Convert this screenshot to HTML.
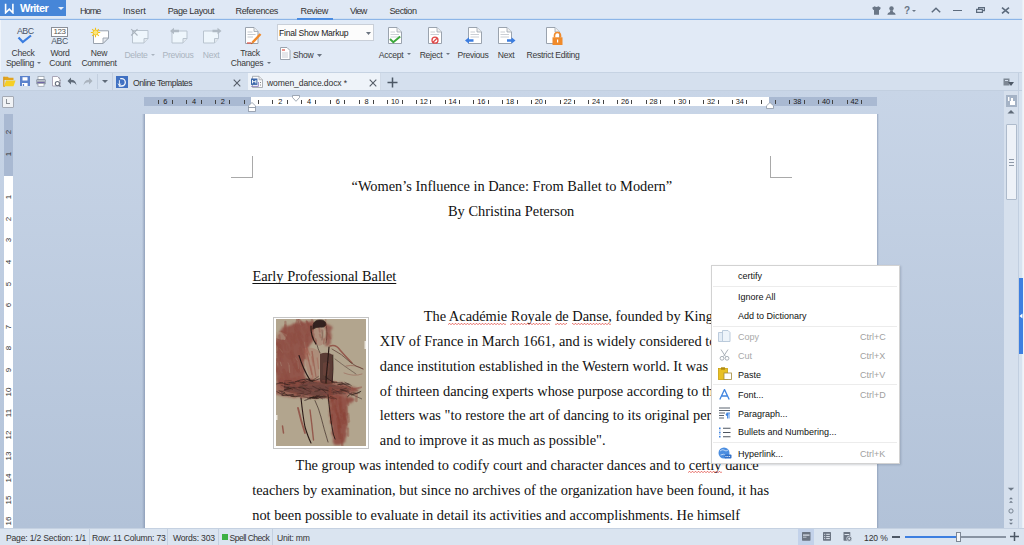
<!DOCTYPE html>
<html><head><meta charset="utf-8"><style>
*{margin:0;padding:0;box-sizing:border-box}
html,body{width:1024px;height:545px;overflow:hidden}
body{position:relative;background:#c3d0e2;font-family:"Liberation Sans",sans-serif;font-size:9px;color:#333}
.a{position:absolute}
svg{display:block}
.ui{font-size:8.6px;letter-spacing:-0.25px;color:#3a3a3a;white-space:nowrap;line-height:10px}
.tab{top:4px;font-size:9.1px;letter-spacing:-0.2px;color:#333;white-space:nowrap;line-height:12px}
.rb{font-size:8.6px;letter-spacing:-0.3px;color:#3a3a3a;white-space:nowrap;line-height:10px;text-align:center}
.dis{color:#aab4c0}
.tk{top:100px;width:1px;height:3.5px;background:#444}
.rn{top:96.5px;width:20px;text-align:center;font-size:7.4px;line-height:10px;color:#1a1a1a;letter-spacing:-0.1px}
.vn{left:4.2px;width:10px;height:10px;font-size:8px;line-height:10px;text-align:center;color:#333;transform:rotate(-90deg)}
.doc{font-family:"Liberation Serif",serif;font-size:14.4px;color:#111;white-space:nowrap;line-height:17px}
.mi{font-size:9px;color:#111;white-space:nowrap;line-height:11px}
.mg{color:#a8a8a8}
.sc{left:860px;font-size:9px;color:#a0a0a0;white-space:nowrap;line-height:11px}
.st{top:533px;font-size:8.6px;letter-spacing:-0.2px;color:#333;white-space:nowrap;line-height:11px}
.ssep{top:529px;width:1px;height:16px;background:#c3cfdf}

</style></head><body>
<!-- title bar -->
<div class="a" style="left:0;top:0;width:1024px;height:20px;background:#dfe8f5"></div>
<div class="a" style="left:0;top:18px;width:1022px;height:1px;background:#d0e0f3"></div><div class="a" style="left:0;top:19px;width:1022px;height:1px;background:#8cb5e8"></div>
<div class="a" style="left:0;top:0;width:66px;height:16px;background:#4686d8"></div>
<svg class="a" style="left:4px;top:3px" width="11" height="11" viewBox="0 0 11 11"><path d="M1.6 0.8 V9.8 L5.3 6.2 L8.9 9.8 V0.8" fill="none" stroke="#fff" stroke-width="1.6" stroke-linejoin="miter"/></svg>
<div class="a" style="left:20px;top:2px;font-size:11px;font-weight:bold;letter-spacing:-0.55px;color:#fff;line-height:13px">Writer</div>
<svg class="a" style="left:58px;top:7px" width="6" height="3" viewBox="0 0 6 3"><path d="M0 0H6L3 3Z" fill="#e6eefa"/></svg>
<div class="a tab" style="left:80px;top:4.5px;letter-spacing:-0.95px">Home</div>
<div class="a tab" style="left:123px;top:4.5px;letter-spacing:0px">Insert</div>
<div class="a tab" style="left:167.7px;top:4.5px;letter-spacing:-0.42px">Page Layout</div>
<div class="a tab" style="left:235.5px;top:4.5px;letter-spacing:-0.4px">References</div>
<div class="a tab" style="left:300.5px;top:4.5px;letter-spacing:-0.4px">Review</div>
<div class="a tab" style="left:350px;top:4.5px;letter-spacing:-0.75px">View</div>
<div class="a tab" style="left:389.5px;top:4.5px;letter-spacing:-0.47px">Section</div>
<div class="a" style="left:297px;top:18px;width:36px;height:2px;background:#4a8ce2"></div>
<!-- title right icons -->
<svg class="a" style="left:872px;top:6px" width="9" height="9" viewBox="0 0 9 9"><path d="M2.6 0.3 L0.2 1.8 L1.2 4 L2 3.7 V8.7 H7 V3.7 L7.8 4 L8.8 1.8 L6.4 0.3 Q4.5 1.8 2.6 0.3Z" fill="#6a7686"/></svg>
<svg class="a" style="left:887px;top:6px" width="9" height="9" viewBox="0 0 9 9"><circle cx="4.5" cy="2.4" r="2.2" fill="#6a7686"/><path d="M3.3 4.2 H5.7 L6 6 Q8.5 6.5 8.7 8.8 H0.3 Q0.5 6.5 3 6Z" fill="#6a7686"/></svg>
<div class="a" style="left:904px;top:5px;font-size:10px;font-weight:bold;color:#6a7686;line-height:11px">?</div>
<svg class="a" style="left:912px;top:10px" width="4" height="2" viewBox="0 0 4 2"><path d="M0 0H4L2 2Z" fill="#6a7686"/></svg>
<svg class="a" style="left:931px;top:7px" width="10" height="6" viewBox="0 0 10 6"><path d="M0.8 5.2 L5 1.2 L9.2 5.2" fill="none" stroke="#5d6b7d" stroke-width="1.5"/></svg>
<div class="a" style="left:953px;top:9.5px;width:9px;height:1.3px;background:#5d6b7d"></div>
<svg class="a" style="left:976px;top:7px" width="9" height="6" viewBox="0 0 9 6"><path d="M0.6 2.4 H6.4 V5.4 H0.6Z M2.6 2.4 V0.6 H8.4 V3.6 H6.4" fill="none" stroke="#5d6b7d" stroke-width="1.2"/></svg>
<svg class="a" style="left:1001px;top:7px" width="9" height="7" viewBox="0 0 9 7"><path d="M1 0.6 L8 6.4 M8 0.6 L1 6.4" stroke="#5d6b7d" stroke-width="1.6"/></svg>

<!-- ribbon -->
<div class="a" style="left:0;top:20px;width:1024px;height:52px;background:#e1eaf6;border-left:1px solid #f0f4fa"></div>
<div class="a" style="left:0;top:72px;width:1024px;height:1px;background:#c6d3e3"></div>
<!-- check spelling -->
<div class="a" style="left:17px;top:26.5px;font-size:8.8px;letter-spacing:-0.5px;color:#4a5566;line-height:9px">ABC</div>
<svg class="a" style="left:17px;top:34px" width="16" height="10" viewBox="0 0 16 10"><path d="M1.5 3.5 L5.8 8 L14 1.5" fill="none" stroke="#3b7de0" stroke-width="2.2"/></svg>
<div class="a rb" style="left:3px;top:48px;width:40px">Check</div>
<div class="a rb" style="left:0px;top:58px;width:40px">Spelling</div>
<svg class="a" style="left:37px;top:62px" width="4" height="2" viewBox="0 0 4 2"><path d="M0 0H4L2 2Z" fill="#6b7480"/></svg>
<!-- word count -->
<div class="a" style="left:51px;top:27px;width:17px;height:10px;border:1px solid #8a8f98;background:#fff;font-size:8px;letter-spacing:-0.5px;color:#555;line-height:8px;text-align:center">123</div>
<div class="a" style="left:50px;top:37px;width:19px;font-size:8.6px;letter-spacing:-0.4px;color:#4a5566;line-height:8px;text-align:center">ABC</div>
<div class="a rb" style="left:40px;top:48px;width:40px">Word</div>
<div class="a rb" style="left:40px;top:58px;width:40px">Count</div>
<!-- new comment -->
<svg class="a" style="left:90px;top:27px" width="20" height="18" viewBox="0 0 20 18"><path d="M3.5 3.8 H18.5 V11 L13 16.5 H3.5Z" fill="#fff" stroke="#9aa3ae" stroke-width="1"/><path d="M18.5 11 H13 V16.5Z" fill="#e4e8ee" stroke="#9aa3ae" stroke-width="0.9" stroke-linejoin="round"/><g stroke="#f2c21a" stroke-width="1.1"><path d="M5.5 0.8V10.2M0.8 5.5H10.2M2.2 2.2L8.8 8.8M8.8 2.2L2.2 8.8"/></g><circle cx="5.5" cy="5.5" r="2.5" fill="#fbe57c" stroke="#f2c21a" stroke-width="0.8"/></svg>
<div class="a rb" style="left:79px;top:48px;width:40px">New</div>
<div class="a rb" style="left:79px;top:58px;width:40px">Comment</div>
<!-- delete (disabled) -->
<svg class="a" style="left:130px;top:28px" width="20" height="17" viewBox="0 0 20 17"><path d="M2.5 2.5 H18 V10.5 L14 15 H2.5Z" fill="#eef6fc" stroke="#b9c4cf" stroke-width="1"/><path d="M18 10.5 H14 V15" fill="#e2e8ee" stroke="#b9c4cf" stroke-width="1"/><path d="M1.2 1.2 L7.5 7.5 M7.5 1.2 L1.2 7.5" stroke="#a9b3bd" stroke-width="1.1"/></svg>
<div class="a rb dis" style="left:116px;top:50px;width:40px">Delete</div>
<svg class="a" style="left:151px;top:54px" width="4" height="2" viewBox="0 0 4 2"><path d="M0 0H4L2 2Z" fill="#aab4c0"/></svg>
<!-- previous (disabled) -->
<svg class="a" style="left:169px;top:27px" width="20" height="18" viewBox="0 0 20 18"><path d="M3 4 H18 V11.5 L14 16 H3Z" fill="#eef6fc" stroke="#b9c4cf" stroke-width="1"/><path d="M18 11.5 H14 V16" fill="#e2e8ee" stroke="#b9c4cf" stroke-width="1"/><path d="M1 4 L5 0.8 V2.8 H10 V5.2 H5 V7.2Z" fill="#b0bac4"/></svg>
<div class="a rb dis" style="left:158px;top:50px;width:40px">Previous</div>
<!-- next (disabled) -->
<svg class="a" style="left:202px;top:27px" width="20" height="18" viewBox="0 0 20 18"><path d="M1.5 4 H16.5 V11.5 L12.5 16 H1.5Z" fill="#eef6fc" stroke="#b9c4cf" stroke-width="1"/><path d="M16.5 11.5 H12.5 V16" fill="#e2e8ee" stroke="#b9c4cf" stroke-width="1"/><path d="M19.5 4 L15.5 0.8 V2.8 H10.5 V5.2 H15.5 V7.2Z" fill="#b0bac4"/></svg>
<div class="a rb dis" style="left:191px;top:50px;width:40px">Next</div>
<!-- track changes -->
<svg class="a" style="left:243px;top:27px" width="19" height="18" viewBox="0 0 19 18"><path d="M2.5 0.5 H11 L15 4.5 V16.5 H2.5Z" fill="#fff" stroke="#9aa3ae" stroke-width="1"/><path d="M11 0.5 V4.5 H15" fill="#eee" stroke="#9aa3ae" stroke-width="0.8"/><path d="M4.5 5H9.5M4.5 7.5H12.5M4.5 10H10" stroke="#c5cad0" stroke-width="1"/><path d="M4 16 H8" stroke="#e05040" stroke-width="1.2"/><path d="M17.5 7 L9.5 15.5" stroke="#f0892a" stroke-width="2.4"/><path d="M9.5 15.5 L8.3 16.8" stroke="#c05a10" stroke-width="1.2"/></svg>
<div class="a rb" style="left:230px;top:48px;width:40px">Track</div>
<div class="a rb" style="left:227px;top:58px;width:40px">Changes</div>
<svg class="a" style="left:267px;top:62px" width="4" height="2" viewBox="0 0 4 2"><path d="M0 0H4L2 2Z" fill="#6b7480"/></svg>
<!-- final show markup dropdown -->
<div class="a" style="left:277px;top:24px;width:97px;height:17px;background:#fcfcfc;border:1px solid #c9cfd8"></div>
<div class="a ui" style="left:279px;top:28px;color:#222">Final Show Markup</div>
<svg class="a" style="left:366px;top:32px" width="5" height="3" viewBox="0 0 5 3"><path d="M0 0H5L2.5 3Z" fill="#6b7480"/></svg>
<!-- show -->
<svg class="a" style="left:279px;top:47px" width="12" height="13" viewBox="0 0 12 13"><path d="M1.5 0.5 H8 L11 3.5 V12.5 H1.5Z" fill="#fff" stroke="#9aa3ae" stroke-width="1"/><path d="M3 3 H6" stroke="#e05040" stroke-width="1.2"/><path d="M3 6H9M3 8H9M3 10H9" stroke="#c5cad0" stroke-width="0.9"/></svg>
<div class="a ui" style="left:293px;top:50px">Show</div>
<svg class="a" style="left:317px;top:54px" width="5" height="3" viewBox="0 0 5 3"><path d="M0 0H5L2.5 3Z" fill="#6b7480"/></svg>
<!-- accept -->
<svg class="a" style="left:387px;top:26px" width="17" height="19" viewBox="0 0 17 19"><path d="M1.5 1.5 H10 L14.5 6 V17.5 H1.5Z" fill="#fff" stroke="#9aa3ae" stroke-width="1"/><path d="M10 1.5 V6 H14.5" fill="#eee" stroke="#9aa3ae" stroke-width="0.8"/><path d="M3.5 6H8M3.5 8.5H12M3.5 11H12" stroke="#c5cad0" stroke-width="0.9"/><path d="M3 13 L6.3 16.2 L13.2 10.5" fill="none" stroke="#3aa83a" stroke-width="2"/></svg>
<div class="a rb" style="left:371px;top:50px;width:40px">Accept</div>
<svg class="a" style="left:407px;top:53px" width="4" height="2" viewBox="0 0 4 2"><path d="M0 0H4L2 2Z" fill="#6b7480"/></svg>
<!-- reject -->
<svg class="a" style="left:427px;top:26px" width="17" height="19" viewBox="0 0 17 19"><path d="M1.5 1.5 H10 L14.5 6 V17.5 H1.5Z" fill="#fff" stroke="#9aa3ae" stroke-width="1"/><path d="M10 1.5 V6 H14.5" fill="#eee" stroke="#9aa3ae" stroke-width="0.8"/><path d="M3.5 6H8M3.5 8.5H12" stroke="#c5cad0" stroke-width="0.9"/><circle cx="8" cy="14.2" r="3" fill="#fff" stroke="#e04848" stroke-width="1.3"/><path d="M6 16.2 L10 12.2" stroke="#e04848" stroke-width="1.3"/></svg>
<div class="a rb" style="left:411px;top:50px;width:40px">Reject</div>
<svg class="a" style="left:446px;top:53px" width="4" height="2" viewBox="0 0 4 2"><path d="M0 0H4L2 2Z" fill="#6b7480"/></svg>
<!-- previous -->
<svg class="a" style="left:464px;top:26px" width="20" height="19" viewBox="0 0 20 19"><path d="M4.5 1.5 H13 L17.5 6 V17.5 H4.5Z" fill="#fff" stroke="#9aa3ae" stroke-width="1"/><path d="M13 1.5 V6 H17.5" fill="#eee" stroke="#9aa3ae" stroke-width="0.8"/><path d="M6.5 6H11M6.5 8.5H15M6.5 11H15" stroke="#c5cad0" stroke-width="0.9"/><path d="M1 14.5 L5 11.2 V13.3 H9.5 V15.7 H5 V17.8Z" fill="#3b7de0"/></svg>
<div class="a rb" style="left:453px;top:50px;width:40px">Previous</div>
<!-- next -->
<svg class="a" style="left:497px;top:26px" width="20" height="19" viewBox="0 0 20 19"><path d="M1.5 1.5 H10 L14.5 6 V17.5 H1.5Z" fill="#fff" stroke="#9aa3ae" stroke-width="1"/><path d="M10 1.5 V6 H14.5" fill="#eee" stroke="#9aa3ae" stroke-width="0.8"/><path d="M3.5 6H8M3.5 8.5H12M3.5 11H12" stroke="#c5cad0" stroke-width="0.9"/><path d="M18.5 14.5 L14.5 11.2 V13.3 H10 V15.7 H14.5 V17.8Z" fill="#3b7de0"/></svg>
<div class="a rb" style="left:486px;top:50px;width:40px">Next</div>
<!-- restrict editing -->
<svg class="a" style="left:545px;top:26px" width="18" height="20" viewBox="0 0 18 20"><path d="M1.5 1.5 H10 L14.5 6 V17.5 H1.5Z" fill="#fff" stroke="#9aa3ae" stroke-width="1"/><path d="M10 1.5 V6 H14.5" fill="#eee" stroke="#9aa3ae" stroke-width="0.8"/><path d="M9.5 11.5 V9.5 A3 3 0 0 1 15.5 9.5 V11.5" fill="none" stroke="#f08a2a" stroke-width="1.6"/><rect x="7.5" y="11.3" width="10" height="7.7" fill="#f08a2a"/><rect x="12" y="13.5" width="1.2" height="3" fill="#fff"/></svg>
<div class="a rb" style="left:523px;top:50px;width:60px">Restrict Editing</div>

<!-- tab row -->
<div class="a" style="left:0;top:73px;width:1024px;height:17px;background:#d5e0ee"></div>
<div class="a" style="left:0;top:90px;width:1024px;height:1px;background:#c2cfe0"></div>
<svg class="a" style="left:3px;top:76px" width="13" height="11" viewBox="0 0 13 11"><path d="M0.8 0.8 H4.8 L5.8 1.8 H10.5 V4 H0.8Z" fill="#e2a41e"/><path d="M0.8 0.8 V10.2 H2" stroke="#d9961a" stroke-width="1.2" fill="none"/><path d="M1 10.2 L3 4.5 H12.5 L10.5 10.2Z" fill="#f6cf25"/></svg>
<svg class="a" style="left:20px;top:76px" width="10" height="10" viewBox="0 0 10 10"><rect x="0" y="0" width="10" height="10" fill="#5a82cc"/><rect x="2.5" y="1.2" width="5" height="3.3" fill="#fff"/><rect x="2" y="7" width="5.6" height="3" fill="#fff"/><rect x="2.8" y="8" width="1.3" height="2" fill="#5a82cc"/></svg>
<svg class="a" style="left:36px;top:76px" width="10" height="11" viewBox="0 0 10 11"><rect x="2" y="0.5" width="6" height="3" fill="#fff" stroke="#9aa2ad" stroke-width="0.8"/><rect x="0.3" y="3" width="9.4" height="5.5" rx="1.2" fill="#8c95a2"/><rect x="1" y="4" width="8" height="1.5" fill="#b9c0ca"/><rect x="1.5" y="6.2" width="7" height="1" fill="#6a5aa8"/><rect x="2" y="7.5" width="6" height="2.8" fill="#fff" stroke="#9aa2ad" stroke-width="0.8"/></svg>
<svg class="a" style="left:52px;top:76px" width="10" height="11" viewBox="0 0 10 11"><path d="M0.5 0.5 H5.5 L8 3 V10 H0.5Z" fill="#fff" stroke="#9a94a8" stroke-width="0.8"/><path d="M7 1.5V2.5M8 4V5M8 6.5V7.5" stroke="#777" stroke-width="0.8"/><circle cx="5.4" cy="7.6" r="2.1" fill="#fff" stroke="#6a7280" stroke-width="1.1"/><path d="M6.9 9.1 L8.6 10.8" stroke="#6a7280" stroke-width="1.2"/></svg>
<svg class="a" style="left:67px;top:77px" width="10" height="9" viewBox="0 0 10 9"><path d="M4 0.5 L0.5 4 L4 7.5 V5.2 Q8 5 9.5 8.5 Q9 2.8 4 2.8Z" fill="#5f6a78"/></svg>
<svg class="a" style="left:83px;top:77px" width="10" height="9" viewBox="0 0 10 9"><path d="M6 0.5 L9.5 4 L6 7.5 V5.2 Q2 5 0.5 8.5 Q1 2.8 6 2.8Z" fill="#aab3be"/></svg>
<div class="a" style="left:97px;top:74px;width:1px;height:15px;background:#c3cfdf"></div>
<svg class="a" style="left:102px;top:80px" width="6" height="3" viewBox="0 0 6 3"><path d="M0 0H6L3 3Z" fill="#5f6a78"/></svg>
<div class="a" style="left:112px;top:73px;width:1px;height:17px;background:#c3cfdf"></div>
<svg class="a" style="left:116px;top:76px" width="12" height="12" viewBox="0 0 12 12"><rect width="12" height="12" fill="#3f70c2"/><path d="M4.2 2.6 H5.6 A3.7 3.7 0 0 1 5.6 10 H2.8" fill="none" stroke="#f4f8fc" stroke-width="1.3"/><path d="M3.4 4.2 V9.2 M2 7.6 L3.4 9.6 L4.8 7.6" fill="none" stroke="#f4f8fc" stroke-width="0.9"/></svg>
<div class="a ui" style="left:133px;top:78px;letter-spacing:-0.45px;color:#333">Online Templates</div>
<svg class="a" style="left:233px;top:79px" width="8" height="8" viewBox="0 0 8 8"><path d="M0.7 0.7 L7.3 7.3 M7.3 0.7 L0.7 7.3" stroke="#555d68" stroke-width="1.1"/></svg>
<div class="a" style="left:248px;top:73px;width:133px;height:17px;background:#eef3f9;border-right:1px solid #d0dae7"></div>
<svg class="a" style="left:250px;top:75px" width="14" height="14" viewBox="0 0 14 14"><path d="M2.5 1.3 H9 L12.5 4.8 V12.5 H2.5Z" fill="#fbfbfc" stroke="#a3a7ad" stroke-width="0.9"/><path d="M9 1.3 V4.8 H12.5" fill="#e8e8ea" stroke="#a3a7ad" stroke-width="0.7"/><path d="M10.5 7V8M10.5 9.5V10.5" stroke="#555" stroke-width="0.7"/><path d="M1.2 11.4 H8.4 V7" fill="none" stroke="#8a7fc0" stroke-width="0.9"/><rect x="1" y="3.5" width="6.4" height="6.4" fill="#3a66aa"/><path d="M2.5 5 V8.4 M5.9 5 V8.4 M2.5 6.7 H5.9" stroke="#f2f5fa" stroke-width="1"/></svg>
<div class="a ui" style="left:267px;top:78px;letter-spacing:-0.12px;color:#333">women_dance.docx *</div>
<svg class="a" style="left:369px;top:79px" width="8" height="8" viewBox="0 0 8 8"><path d="M0.7 0.7 L7.3 7.3 M7.3 0.7 L0.7 7.3" stroke="#555d68" stroke-width="1.1"/></svg>
<svg class="a" style="left:387px;top:77px" width="11" height="11" viewBox="0 0 11 11"><path d="M5.5 0.5V10.5M0.5 5.5H10.5" stroke="#4d5866" stroke-width="1.5"/></svg>
<svg class="a" style="left:1003px;top:78px" width="11" height="9" viewBox="0 0 11 9"><rect x="0.5" y="0.5" width="6" height="7" fill="#7d8794"/><rect x="2" y="2" width="3" height="1" fill="#d5e0ee"/><path d="M5 4 H11 L8 8Z" fill="#4d5866"/></svg>

<!-- workspace -->
<div class="a" style="left:0;top:91px;width:1004px;height:437px;background:linear-gradient(#c8d5e7,#b2c2d8)"></div>
<!-- L box -->
<div class="a" style="left:2px;top:96px;width:12px;height:12px;background:#f1f3f6;border:1px solid #a4aab5;border-radius:1px"></div>
<div class="a" style="left:6px;top:99px;width:1px;height:5px;background:#8a8f96"></div>
<div class="a" style="left:6px;top:103px;width:4px;height:1px;background:#8a8f96"></div>
<!-- scrollbar -->
<div class="a" style="left:1004px;top:91px;width:14px;height:437px;background:#d6e0ed"></div>
<div class="a" style="left:1018px;top:73px;width:1px;height:455px;background:#c2cfe0"></div>
<div class="a" style="left:1019px;top:91px;width:3px;height:437px;background:#d8e3f0"></div>
<div class="a" style="left:1022px;top:0px;width:2px;height:528px;background:linear-gradient(90deg,#e6edf6,#f3f6fa)"></div>
<div class="a" style="left:1019px;top:278px;width:4px;height:76px;background:#3d7fe0"></div>
<svg class="a" style="left:1019px;top:313px" width="4" height="6" viewBox="0 0 4 6"><path d="M3.5 0.5 L0.5 3 L3.5 5.5Z" fill="#fff"/></svg>
<div class="a" style="left:1006px;top:95px;width:11px;height:12px;background:#a5b3c6"></div>
<svg class="a" style="left:1007px;top:96px" width="9" height="10" viewBox="0 0 9 10"><rect x="1" y="1" width="1.4" height="4" fill="#fff"/><path d="M4 2 H6 V5 H8 V9 H3 V5 H4Z" fill="#fff"/></svg>
<svg class="a" style="left:1007px;top:109px" width="8" height="5" viewBox="0 0 8 5"><path d="M0.5 4.5 L4 1 L7.5 4.5Z" fill="#5f6a78"/></svg>
<div class="a" style="left:1006px;top:124px;width:11px;height:76px;background:#eef2f8;border:1px solid #aebbcc;border-radius:1px"></div>
<div class="a" style="left:1009px;top:159px;width:5px;height:1px;background:#8e99a8"></div>
<div class="a" style="left:1009px;top:162px;width:5px;height:1px;background:#8e99a8"></div>
<div class="a" style="left:1009px;top:165px;width:5px;height:1px;background:#8e99a8"></div>
<svg class="a" style="left:1007px;top:487px" width="8" height="5" viewBox="0 0 8 5"><path d="M0.8 0.8 L4 3.8 L7.2 0.8Z" fill="#6e7a89"/></svg>
<svg class="a" style="left:1008px;top:496px" width="6" height="8" viewBox="0 0 6 8"><path d="M1 3.3 L3 1.2 L5 3.3Z M1 6.8 L3 4.7 L5 6.8Z" fill="#6e7a89"/></svg>
<svg class="a" style="left:1007px;top:507px" width="8" height="8" viewBox="0 0 8 8"><circle cx="4" cy="4" r="2.1" fill="none" stroke="#6e7a89" stroke-width="0.9"/></svg>
<svg class="a" style="left:1008px;top:518px" width="6" height="8" viewBox="0 0 6 8"><path d="M1 1.2 L3 3.3 L5 1.2Z M1 4.7 L3 6.8 L5 4.7Z" fill="#6e7a89"/></svg>

<!-- status bar -->
<div class="a" style="left:0;top:528px;width:1024px;height:17px;background:#dae4f0;border-top:1px solid #c5d1e1"></div>
<div class="a st" style="left:6px">Page: 1/2 Section: 1/1</div>
<div class="a ssep" style="left:89px"></div>
<div class="a st" style="left:92px">Row: 11 Column: 73</div>
<div class="a ssep" style="left:167px"></div>
<div class="a st" style="left:173px">Words: 303</div>
<div class="a ssep" style="left:218px"></div>
<div class="a" style="left:222px;top:534px;width:6px;height:6px;background:#3cb043"></div>
<div class="a st" style="left:229.5px;letter-spacing:-0.55px">Spell Check</div>
<div class="a ssep" style="left:272px"></div>
<div class="a st" style="left:277px">Unit: mm</div>
<div class="a" style="left:798px;top:529px;width:16px;height:16px;background:#c3d2ea"></div>
<svg class="a" style="left:802px;top:532px" width="9" height="9" viewBox="0 0 9 9"><rect x="0" y="0" width="8.5" height="8.7" rx="0.6" fill="#6b7482"/><rect x="1" y="2.5" width="6.5" height="1.2" fill="#dfe6ef"/><rect x="1" y="4.7" width="3.5" height="1" fill="#b9c2cd"/></svg>
<svg class="a" style="left:823px;top:532px" width="9" height="9" viewBox="0 0 9 9"><rect x="0" y="0" width="8" height="8.7" rx="0.6" fill="#6b7482"/><path d="M1.2 2.3H2.2M1.2 4.6H2.2M1.2 6.6H2.2M3.2 2.3H6.8M3.2 4.6H6.8M3.2 6.6H6.8" stroke="#dfe6ef" stroke-width="1"/></svg>
<svg class="a" style="left:843px;top:532px" width="10" height="10" viewBox="0 0 10 10"><rect x="0.5" y="0" width="6.8" height="8.7" rx="0.6" fill="#6b7482"/><rect x="1.5" y="2" width="4.8" height="1" fill="#dfe6ef"/><circle cx="6.3" cy="6.7" r="2.6" fill="#6b7482" stroke="#dae4f0" stroke-width="0.8"/><circle cx="6.3" cy="6.7" r="1.1" fill="#dfe6ef"/></svg>
<div class="a st" style="left:864px;letter-spacing:-0.1px">120 %</div>
<div class="a" style="left:892px;top:536px;width:8px;height:1.5px;background:#4d5866"></div>
<div class="a" style="left:905px;top:536px;width:52px;height:2px;background:#3d7fe0"></div>
<div class="a" style="left:960px;top:536px;width:46px;height:2px;background:#8893a2"></div>
<div class="a" style="left:956px;top:532px;width:5px;height:10px;background:#f4f6f9;border:1px solid #7d8795"></div>
<svg class="a" style="left:1010px;top:532px" width="9" height="9" viewBox="0 0 9 9"><path d="M4.5 0V9M0 4.5H9" stroke="#4d5866" stroke-width="1.5"/></svg>
<div class="a" style="left:144px;top:97px;width:733px;height:9px;background:#a9b9d2"></div>
<div class="a" style="left:251px;top:97px;width:518px;height:9px;background:#fff"></div>
<div class="a tk" style="left:157.5px"></div>
<div class="a tk" style="left:171.8px"></div>
<div class="a tk" style="left:186.2px"></div>
<div class="a tk" style="left:200.5px"></div>
<div class="a tk" style="left:214.9px"></div>
<div class="a tk" style="left:229.3px"></div>
<div class="a tk" style="left:243.6px"></div>
<div class="a tk" style="left:258.0px"></div>
<div class="a tk" style="left:272.3px"></div>
<div class="a tk" style="left:286.7px"></div>
<div class="a tk" style="left:301.1px"></div>
<div class="a tk" style="left:315.4px"></div>
<div class="a tk" style="left:329.8px"></div>
<div class="a tk" style="left:344.1px"></div>
<div class="a tk" style="left:358.5px"></div>
<div class="a tk" style="left:372.9px"></div>
<div class="a tk" style="left:387.2px"></div>
<div class="a tk" style="left:401.6px"></div>
<div class="a tk" style="left:415.9px"></div>
<div class="a tk" style="left:430.3px"></div>
<div class="a tk" style="left:444.7px"></div>
<div class="a tk" style="left:459.0px"></div>
<div class="a tk" style="left:473.4px"></div>
<div class="a tk" style="left:487.7px"></div>
<div class="a tk" style="left:502.1px"></div>
<div class="a tk" style="left:516.5px"></div>
<div class="a tk" style="left:530.8px"></div>
<div class="a tk" style="left:545.2px"></div>
<div class="a tk" style="left:559.5px"></div>
<div class="a tk" style="left:573.9px"></div>
<div class="a tk" style="left:588.3px"></div>
<div class="a tk" style="left:602.6px"></div>
<div class="a tk" style="left:617.0px"></div>
<div class="a tk" style="left:631.3px"></div>
<div class="a tk" style="left:645.7px"></div>
<div class="a tk" style="left:660.1px"></div>
<div class="a tk" style="left:674.4px"></div>
<div class="a tk" style="left:688.8px"></div>
<div class="a tk" style="left:703.1px"></div>
<div class="a tk" style="left:717.5px"></div>
<div class="a tk" style="left:731.9px"></div>
<div class="a tk" style="left:746.2px"></div>
<div class="a tk" style="left:760.6px"></div>
<div class="a tk" style="left:774.9px"></div>
<div class="a tk" style="left:789.3px"></div>
<div class="a tk" style="left:803.7px"></div>
<div class="a tk" style="left:818.0px"></div>
<div class="a tk" style="left:832.4px"></div>
<div class="a tk" style="left:846.7px"></div>
<div class="a tk" style="left:861.1px"></div>
<div class="a rn" style="left:270.2px">2</div>
<div class="a rn" style="left:298.9px">4</div>
<div class="a rn" style="left:327.7px">6</div>
<div class="a rn" style="left:356.4px">8</div>
<div class="a rn" style="left:385.1px">10</div>
<div class="a rn" style="left:413.8px">12</div>
<div class="a rn" style="left:442.5px">14</div>
<div class="a rn" style="left:471.3px">16</div>
<div class="a rn" style="left:500.0px">18</div>
<div class="a rn" style="left:528.7px">20</div>
<div class="a rn" style="left:557.4px">22</div>
<div class="a rn" style="left:586.1px">24</div>
<div class="a rn" style="left:614.9px">26</div>
<div class="a rn" style="left:643.6px">28</div>
<div class="a rn" style="left:672.3px">30</div>
<div class="a rn" style="left:701.0px">32</div>
<div class="a rn" style="left:729.7px">34</div>
<div class="a rn" style="left:787.2px">38</div>
<div class="a rn" style="left:815.9px">40</div>
<div class="a rn" style="left:844.6px">42</div>
<div class="a rn" style="left:212.8px">2</div>
<div class="a rn" style="left:184.1px">4</div>
<div class="a rn" style="left:155.3px">6</div><div class="a" style="left:4px;top:114px;width:9px;height:414px;background:#fff"></div>
<div class="a" style="left:4px;top:114px;width:9px;height:62px;background:#a9b9d2"></div>
<div class="a vn" style="top:149.0px">1</div>
<div class="a vn" style="top:127.4px">2</div>
<div class="a vn" style="top:192.2px">1</div>
<div class="a vn" style="top:213.8px">2</div>
<div class="a vn" style="top:235.4px">3</div>
<div class="a vn" style="top:257.0px">4</div>
<div class="a vn" style="top:278.6px">5</div>
<div class="a vn" style="top:300.2px">6</div>
<div class="a vn" style="top:321.8px">7</div>
<div class="a vn" style="top:343.4px">8</div>
<div class="a vn" style="top:365.0px">9</div>
<div class="a vn" style="top:386.6px">10</div>
<div class="a vn" style="top:408.2px">11</div>
<div class="a vn" style="top:429.8px">12</div>
<div class="a vn" style="top:451.4px">13</div>
<div class="a vn" style="top:473.0px">14</div>
<div class="a vn" style="top:494.6px">15</div>
<div class="a vn" style="top:516.2px">16</div>
<!-- page -->
<div class="a" style="left:142px;top:114px;width:3px;height:414px;background:linear-gradient(90deg,rgba(150,166,190,0),rgba(140,156,182,.9))"></div>
<div class="a" style="left:145px;top:114px;width:732px;height:414px;background:#fff"></div>
<div class="a" style="left:877px;top:114px;width:2px;height:414px;background:linear-gradient(90deg,rgba(140,156,182,.8),rgba(150,166,190,0))"></div>
<!-- corner marks -->
<div class="a" style="left:252px;top:156px;width:1px;height:22px;background:#a9a9a9"></div>
<div class="a" style="left:231px;top:177px;width:22px;height:1px;background:#a9a9a9"></div>
<div class="a" style="left:770px;top:156px;width:1px;height:22px;background:#a9a9a9"></div>
<div class="a" style="left:770px;top:177px;width:22px;height:1px;background:#a9a9a9"></div>
<!-- indent markers -->
<svg class="a" style="left:248px;top:102px" width="8" height="10" viewBox="0 0 8 10"><path d="M0.5 3.8 L4 0.5 L7.5 3.8 V5.5 H0.5Z" fill="#fff" stroke="#8b95a3" stroke-width="0.8"/><rect x="0.5" y="5.5" width="7" height="4" fill="#fff" stroke="#8b95a3" stroke-width="0.8"/></svg>
<svg class="a" style="left:292px;top:95px" width="8" height="7" viewBox="0 0 8 7"><path d="M0.5 0.5 H7.5 V2.5 L4 6.3 L0.5 2.5Z" fill="#fff" stroke="#8b95a3" stroke-width="0.8"/></svg>
<svg class="a" style="left:766px;top:102px" width="8" height="7" viewBox="0 0 8 7"><path d="M0.5 3.8 L4 0.5 L7.5 3.8 V6.5 H0.5Z" fill="#fff" stroke="#8b95a3" stroke-width="0.8"/></svg>

<!-- document text -->
<div class="a doc" style="left:351.5px;top:178.3px">“Women’s Influence in Dance: From Ballet to Modern”</div>
<div class="a doc" style="left:448px;top:203px">By Christina Peterson</div>
<div class="a doc" style="left:252.4px;top:267.5px;text-decoration:underline;text-underline-offset:2px;text-decoration-thickness:1px;text-decoration-skip-ink:none">Early Professional Ballet</div>
<div class="a doc" style="left:423.7px;top:308.2px">The Académie Royale de Danse, founded by King Louis</div>
<div class="a doc" style="left:379.8px;top:333.0px">XIV of France in March 1661, and is widely considered to be the first</div>
<div class="a doc" style="left:379.8px;top:357.8px">dance institution established in the Western world. It was composed</div>
<div class="a doc" style="left:379.8px;top:382.5px">of thirteen dancing experts whose purpose according to the</div>
<div class="a doc" style="left:379.8px;top:407.3px">letters was "to restore the art of dancing to its original perfection</div>
<div class="a doc" style="left:379.8px;top:432.1px">and to improve it as much as possible".</div>
<div class="a doc" style="left:295.6px;top:456.9px">The group was intended to codify court and character dances and to certiy dance</div>
<div class="a doc" style="left:252.2px;top:481.7px">teachers by examination, but since no archives of the organization have been found, it has</div>
<div class="a doc" style="left:252.2px;top:506.5px">not been possible to evaluate in detail its activities and accomplishments. He himself</div>
<!-- wavy underlines -->
<svg class="a" style="left:448px;top:322px" width="163" height="4" viewBox="0 0 163 4">
<defs><pattern id="wv" width="3" height="4" patternUnits="userSpaceOnUse"><path d="M0 2.8 L1.5 1.2 L3 2.8" fill="none" stroke="#e0443c" stroke-width="0.8"/></pattern></defs>
<rect x="0" y="0" width="58" height="4" fill="url(#wv)"/>
<rect x="62" y="0" width="40" height="4" fill="url(#wv)"/>
<rect x="107" y="0" width="12" height="4" fill="url(#wv)"/>
<rect x="124" y="0" width="39" height="4" fill="url(#wv)"/>
</svg>
<svg class="a" style="left:688px;top:470px" width="34" height="4" viewBox="0 0 34 4"><rect x="0" y="0" width="34" height="4" fill="url(#wv)"/></svg>

<!-- image -->
<div class="a" style="left:273px;top:316.5px;width:96px;height:132.5px;background:#fff;border:1px solid #c4c4c4"></div>
<svg class="a" style="left:276px;top:319px" width="90" height="127" viewBox="0 0 90 127">
<defs>
<filter id="wash" x="-20%" y="-20%" width="140%" height="140%"><feTurbulence type="fractalNoise" baseFrequency="0.18" numOctaves="3" seed="11"/><feDisplacementMap in="SourceGraphic" scale="4.5" xChannelSelector="R" yChannelSelector="G"/><feGaussianBlur stdDeviation="1.0"/></filter>
<filter id="soft" x="-30%" y="-30%" width="160%" height="160%"><feGaussianBlur stdDeviation="0.6"/></filter>
<filter id="ink" x="-20%" y="-20%" width="140%" height="140%"><feGaussianBlur stdDeviation="0.3"/></filter>
</defs>
<rect width="90" height="127" fill="#b2a58e"/>
<g filter="url(#wash)" fill="#8f4d43">
<path d="M2 14 Q6 9 12 6 Q20 3 28 4 L37 2 Q40 14 36 24 Q30 32 28 42 Q27 54 31 64 L20 66 L0 66 L0 18Z" opacity="0.9"/>
<path d="M48 3 Q55 4 56 12 Q56 20 53 27 L49 27 Q51 16 48 3Z" opacity="0.8"/>
<path d="M0 60 Q22 58 46 61 Q66 63 82 69 Q82 76 66 78 Q40 80 20 78 Q6 78 0 75Z" opacity="0.75"/>
<path d="M53 77 Q62 75 69 78 Q76 78 80 80 Q77 84 71 84 Q72 100 71 114 Q70 123 64 125 L58 125 Q54 100 53 77Z" opacity="0.92"/>
</g>
<g filter="url(#soft)">
<path d="M0 13 Q6 12 11 16 L9 21 Q4 21 0 19Z" fill="#b09a84" opacity="0.6"/>
<path d="M38 8 Q45 7 48 11 L48 24 Q45 28 41 26 Q37 18 38 8Z" fill="#ab8a78" opacity="0.85"/>
<path d="M29 29 Q37 27 44 33 L43 60 Q37 63 33 57 Q28 44 29 29Z" fill="#a97a6a" opacity="0.55"/>
<path d="M31 34 L36 56 M36 32 L40 58" stroke="#95594c" stroke-width="1.3" opacity="0.6"/>
<path d="M44 35 Q51 32 57 36 L57 64 Q50 67 44 63Z" fill="#4a2a24" opacity="0.85"/>
<path d="M47 44 Q51 42 54 45 L53 56 Q50 58 47 56Z" fill="#7c4c42" opacity="0.4"/>
<path d="M8 63 Q30 61 50 64 Q64 67 74 71 Q62 77 40 77 Q22 76 8 72Z" fill="#3e231e" opacity="0.45"/>
</g>
<g stroke-linecap="round" filter="url(#ink)">
<path d="M23.0 1.0 L25.6 6.2" stroke="#8e4d42" stroke-width="3.0" opacity="0.44"/>
<path d="M33.2 5.6 L34.6 9.6" stroke="#8e4d42" stroke-width="1.9" opacity="0.40"/>
<path d="M22.6 33.1 L26.8 40.7" stroke="#8e4d42" stroke-width="3.1" opacity="0.30"/>
<path d="M13.4 8.6 L12.5 15.3" stroke="#8e4d42" stroke-width="1.7" opacity="0.32"/>
<path d="M18.9 60.4 L21.9 68.2" stroke="#8e4d42" stroke-width="3.2" opacity="0.42"/>
<path d="M25.3 2.2 L28.3 7.7" stroke="#8e4d42" stroke-width="1.7" opacity="0.35"/>
<path d="M3.3 16.4 L4.3 23.2" stroke="#8e4d42" stroke-width="2.2" opacity="0.34"/>
<path d="M9.6 57.5 L10.7 66.3" stroke="#8e4d42" stroke-width="1.8" opacity="0.45"/>
<path d="M7.0 21.8 L5.5 30.8" stroke="#8e4d42" stroke-width="2.6" opacity="0.44"/>
<path d="M9.1 14.1 L14.8 24.2" stroke="#8e4d42" stroke-width="3.3" opacity="0.36"/>
<path d="M25.3 23.5 L24.5 31.1" stroke="#8e4d42" stroke-width="2.0" opacity="0.35"/>
<path d="M20.3 13.3 L22.4 24.3" stroke="#8e4d42" stroke-width="2.3" opacity="0.34"/>
<path d="M4.1 38.5 L4.2 45.8" stroke="#8e4d42" stroke-width="1.6" opacity="0.38"/>
<path d="M0.0 44.0 L0.9 52.3" stroke="#8e4d42" stroke-width="2.0" opacity="0.43"/>
<path d="M2.5 24.3 L6.0 35.4" stroke="#8e4d42" stroke-width="3.3" opacity="0.35"/>
<path d="M19.6 8.0 L18.5 18.9" stroke="#8e4d42" stroke-width="2.1" opacity="0.43"/>
<path d="M23.0 7.6 L23.3 15.9" stroke="#8e4d42" stroke-width="3.1" opacity="0.41"/>
<path d="M-3.6 18.3 L3.6 27.2" stroke="#8e4d42" stroke-width="3.3" opacity="0.47"/>
<path d="M0.3 29.1 L6.3 37.2" stroke="#8e4d42" stroke-width="3.0" opacity="0.33"/>
<path d="M15.6 32.3 L20.5 42.1" stroke="#8e4d42" stroke-width="2.3" opacity="0.34"/>
<path d="M18.9 45.9 L22.1 51.5" stroke="#8e4d42" stroke-width="3.5" opacity="0.43"/>
<path d="M15.0 32.7 L18.3 37.5" stroke="#8e4d42" stroke-width="2.2" opacity="0.42"/>
<path d="M6.1 12.5 L11.4 19.7" stroke="#8e4d42" stroke-width="2.0" opacity="0.48"/>
<path d="M30.5 2.4 L34.9 10.7" stroke="#8e4d42" stroke-width="1.9" opacity="0.33"/>
<path d="M18.0 49.5 L17.9 55.0" stroke="#8e4d42" stroke-width="1.7" opacity="0.39"/>
<path d="M15.8 27.2 L16.4 36.6" stroke="#8e4d42" stroke-width="3.5" opacity="0.32"/>
<path d="M15.5 20.7 L15.1 26.7" stroke="#8e4d42" stroke-width="1.9" opacity="0.39"/>
<path d="M13.4 14.8 L18.7 24.9" stroke="#8e4d42" stroke-width="2.4" opacity="0.47"/>
<path d="M21.8 -0.0 L20.0 10.5" stroke="#8e4d42" stroke-width="3.4" opacity="0.49"/>
<path d="M31.5 9.9 L33.0 15.4" stroke="#8e4d42" stroke-width="2.3" opacity="0.31"/>
<path d="M12.1 60.5 L16.7 69.6" stroke="#8e4d42" stroke-width="2.4" opacity="0.38"/>
<path d="M19.4 45.3 L22.8 50.7" stroke="#8e4d42" stroke-width="3.4" opacity="0.42"/>
<path d="M18.0 46.4 L23.2 53.3" stroke="#8e4d42" stroke-width="2.5" opacity="0.47"/>
<path d="M4.4 61.3 L7.6 65.7" stroke="#8e4d42" stroke-width="2.7" opacity="0.44"/>
<path d="M9.2 6.7 L8.7 12.6" stroke="#8e4d42" stroke-width="2.7" opacity="0.42"/>
<path d="M14.6 33.8 L17.3 44.9" stroke="#8e4d42" stroke-width="1.9" opacity="0.44"/>
<path d="M8.7 24.2 L9.4 30.5" stroke="#8e4d42" stroke-width="2.1" opacity="0.45"/>
<path d="M3.8 25.4 L1.7 37.2" stroke="#8e4d42" stroke-width="1.6" opacity="0.34"/>
<path d="M10.5 56.2 L9.7 67.2" stroke="#8e4d42" stroke-width="2.2" opacity="0.33"/>
<path d="M30.4 15.4 L31.7 26.9" stroke="#8e4d42" stroke-width="1.8" opacity="0.32"/>
<path d="M2.1 33.4 L6.0 41.4" stroke="#8e4d42" stroke-width="2.9" opacity="0.34"/>
<path d="M22.6 13.5 L25.6 24.3" stroke="#8e4d42" stroke-width="3.2" opacity="0.32"/>
<path d="M12.8 15.8 L19.4 23.6" stroke="#8e4d42" stroke-width="2.8" opacity="0.35"/>
<path d="M27.5 35.4 L28.8 39.2" stroke="#8e4d42" stroke-width="1.7" opacity="0.48"/>
<path d="M11.7 54.1 L11.7 65.0" stroke="#8e4d42" stroke-width="3.3" opacity="0.34"/>
<path d="M9.4 3.0 L9.6 14.1" stroke="#8e4d42" stroke-width="2.3" opacity="0.42"/>
<path d="M6.2 55.6 L5.5 67.4" stroke="#8e4d42" stroke-width="3.1" opacity="0.48"/>
<path d="M-1.3 43.9 L3.2 54.4" stroke="#8e4d42" stroke-width="3.1" opacity="0.47"/>
<path d="M30.8 16.6 L30.8 21.5" stroke="#8e4d42" stroke-width="3.2" opacity="0.47"/>
<path d="M7.5 51.2 L9.4 57.3" stroke="#8e4d42" stroke-width="3.1" opacity="0.35"/>
<path d="M12.9 54.2 L12.0 60.4" stroke="#8e4d42" stroke-width="2.8" opacity="0.38"/>
<path d="M36.1 6.7 L35.3 12.1" stroke="#8e4d42" stroke-width="3.4" opacity="0.35"/>
<path d="M3.9 26.6 L4.3 33.1" stroke="#8e4d42" stroke-width="2.7" opacity="0.40"/>
<path d="M12.4 34.6 L16.9 43.2" stroke="#8e4d42" stroke-width="1.5" opacity="0.49"/>
<path d="M20.2 43.4 L20.7 52.7" stroke="#8e4d42" stroke-width="2.2" opacity="0.31"/>
<path d="M23.0 18.2 L27.5 28.0" stroke="#8e4d42" stroke-width="2.9" opacity="0.36"/>
<path d="M10.7 25.1 L12.8 31.1" stroke="#8e4d42" stroke-width="1.8" opacity="0.38"/>
<path d="M9.4 34.7 L13.5 39.5" stroke="#8e4d42" stroke-width="2.4" opacity="0.42"/>
<path d="M24.0 29.0 L25.8 34.5" stroke="#8e4d42" stroke-width="2.4" opacity="0.48"/>
<path d="M27.9 9.6 L32.6 16.2" stroke="#8e4d42" stroke-width="2.8" opacity="0.37"/>
<path d="M24.5 14.6 L26.6 18.2" stroke="#8e4d42" stroke-width="2.0" opacity="0.40"/>
<path d="M30.8 2.4 L33.8 10.9" stroke="#8e4d42" stroke-width="1.9" opacity="0.44"/>
<path d="M18.5 15.6 L19.0 19.6" stroke="#8e4d42" stroke-width="3.0" opacity="0.45"/>
<path d="M1.0 24.2 L7.1 34.2" stroke="#8e4d42" stroke-width="2.5" opacity="0.31"/>
<path d="M7.9 51.3 L11.0 61.3" stroke="#8e4d42" stroke-width="2.8" opacity="0.50"/>
<path d="M23.0 58.4 L22.3 67.2" stroke="#8e4d42" stroke-width="2.9" opacity="0.40"/>
<path d="M15.9 14.6 L20.1 22.6" stroke="#8e4d42" stroke-width="3.0" opacity="0.40"/>
<path d="M22.0 17.0 L25.7 22.1" stroke="#8e4d42" stroke-width="2.0" opacity="0.36"/>
<path d="M18.3 6.7 L22.8 15.1" stroke="#8e4d42" stroke-width="2.9" opacity="0.31"/>
<path d="M14.6 34.1 L16.4 39.4" stroke="#8e4d42" stroke-width="2.3" opacity="0.48"/>
<path d="M21.9 43.5 L22.5 49.5" stroke="#b09b86" stroke-width="0.8" opacity="0.27"/>
<path d="M13.0 46.8 L13.7 53.6" stroke="#b09b86" stroke-width="0.9" opacity="0.40"/>
<path d="M19.7 38.9 L21.8 42.3" stroke="#b09b86" stroke-width="0.9" opacity="0.28"/>
<path d="M12.0 43.8 L13.5 47.1" stroke="#b09b86" stroke-width="0.9" opacity="0.29"/>
<path d="M22.6 1.3 L24.7 6.1" stroke="#b09b86" stroke-width="0.6" opacity="0.39"/>
<path d="M3.8 29.8 L6.5 33.3" stroke="#b09b86" stroke-width="0.7" opacity="0.33"/>
<path d="M28.4 23.1 L29.5 29.4" stroke="#b09b86" stroke-width="0.8" opacity="0.28"/>
<path d="M0.7 34.3 L0.7 38.7" stroke="#b09b86" stroke-width="1.0" opacity="0.41"/>
<path d="M24.7 48.4 L24.8 52.2" stroke="#b09b86" stroke-width="0.6" opacity="0.30"/>
<path d="M4.2 43.0 L5.4 46.7" stroke="#b09b86" stroke-width="1.0" opacity="0.41"/>
<path d="M37.8 15.1 L37.5 18.5" stroke="#8e4d42" stroke-width="1.8" opacity="0.44"/>
<path d="M35.3 -1.0 L37.4 4.3" stroke="#8e4d42" stroke-width="2.0" opacity="0.34"/>
<path d="M49.8 0.2 L49.7 5.7" stroke="#8e4d42" stroke-width="1.1" opacity="0.41"/>
<path d="M50.8 13.7 L54.6 19.5" stroke="#8e4d42" stroke-width="1.8" opacity="0.33"/>
<path d="M43.1 8.5 L43.8 12.8" stroke="#8e4d42" stroke-width="1.8" opacity="0.42"/>
<path d="M48.1 20.2 L47.9 24.9" stroke="#8e4d42" stroke-width="1.7" opacity="0.44"/>
<path d="M39.6 19.6 L40.3 24.5" stroke="#8e4d42" stroke-width="1.4" opacity="0.40"/>
<path d="M40.2 21.5 L39.6 24.8" stroke="#8e4d42" stroke-width="1.9" opacity="0.31"/>
<path d="M43.8 15.4 L44.7 18.4" stroke="#8e4d42" stroke-width="1.9" opacity="0.30"/>
<path d="M37.6 18.7 L39.8 24.8" stroke="#8e4d42" stroke-width="1.7" opacity="0.32"/>
<path d="M34.7 47.0 L36.9 58.0" stroke="#a0584a" stroke-width="1.3" opacity="0.41"/>
<path d="M28.7 31.7 L30.3 40.0" stroke="#a0584a" stroke-width="1.4" opacity="0.36"/>
<path d="M35.7 37.9 L37.3 46.4" stroke="#a0584a" stroke-width="1.5" opacity="0.32"/>
<path d="M30.8 29.5 L33.3 36.0" stroke="#a0584a" stroke-width="1.3" opacity="0.41"/>
<path d="M29.4 30.0 L32.5 41.4" stroke="#a0584a" stroke-width="1.8" opacity="0.36"/>
<path d="M31.1 28.5 L33.9 35.8" stroke="#a0584a" stroke-width="1.0" opacity="0.27"/>
<path d="M36.0 32.3 L37.0 42.7" stroke="#a0584a" stroke-width="1.5" opacity="0.29"/>
<path d="M41.2 39.0 L42.6 49.5" stroke="#a0584a" stroke-width="1.3" opacity="0.35"/>
<path d="M30.4 25.7 L31.5 35.5" stroke="#a0584a" stroke-width="1.6" opacity="0.34"/>
<path d="M27.9 29.5 L29.9 37.7" stroke="#a0584a" stroke-width="1.8" opacity="0.29"/>
<path d="M59.3 70.7 L66.1 72.7" stroke="#8e4d42" stroke-width="1.8" opacity="0.39"/>
<path d="M32.8 75.5 L39.8 78.7" stroke="#8e4d42" stroke-width="1.9" opacity="0.42"/>
<path d="M57.3 79.3 L64.1 78.5" stroke="#8e4d42" stroke-width="2.0" opacity="0.33"/>
<path d="M9.9 61.7 L18.6 59.4" stroke="#8e4d42" stroke-width="1.9" opacity="0.36"/>
<path d="M14.6 72.8 L23.4 74.9" stroke="#8e4d42" stroke-width="2.0" opacity="0.48"/>
<path d="M58.0 70.8 L71.2 73.5" stroke="#8e4d42" stroke-width="1.6" opacity="0.41"/>
<path d="M50.4 77.2 L55.8 79.0" stroke="#8e4d42" stroke-width="1.2" opacity="0.36"/>
<path d="M58.4 71.1 L64.5 70.8" stroke="#8e4d42" stroke-width="2.0" opacity="0.44"/>
<path d="M74.4 69.3 L80.2 69.7" stroke="#8e4d42" stroke-width="1.1" opacity="0.39"/>
<path d="M19.7 65.6 L33.1 62.9" stroke="#8e4d42" stroke-width="2.3" opacity="0.42"/>
<path d="M49.4 66.0 L60.9 63.3" stroke="#8e4d42" stroke-width="1.7" opacity="0.43"/>
<path d="M45.1 72.1 L50.9 72.6" stroke="#8e4d42" stroke-width="1.5" opacity="0.37"/>
<path d="M49.3 77.2 L60.6 76.8" stroke="#8e4d42" stroke-width="1.4" opacity="0.49"/>
<path d="M62.8 70.3 L70.6 70.8" stroke="#8e4d42" stroke-width="1.5" opacity="0.49"/>
<path d="M28.2 67.5 L38.1 72.1" stroke="#8e4d42" stroke-width="1.8" opacity="0.38"/>
<path d="M10.3 65.2 L20.5 68.0" stroke="#8e4d42" stroke-width="2.1" opacity="0.34"/>
<path d="M39.4 78.2 L50.7 78.7" stroke="#8e4d42" stroke-width="1.2" opacity="0.49"/>
<path d="M45.0 64.8 L54.8 63.3" stroke="#8e4d42" stroke-width="1.8" opacity="0.32"/>
<path d="M33.3 60.0 L42.3 63.0" stroke="#8e4d42" stroke-width="2.1" opacity="0.40"/>
<path d="M19.1 75.1 L25.7 78.0" stroke="#8e4d42" stroke-width="1.8" opacity="0.38"/>
<path d="M69.6 67.5 L81.6 71.9" stroke="#8e4d42" stroke-width="1.4" opacity="0.46"/>
<path d="M27.9 78.0 L40.2 79.2" stroke="#8e4d42" stroke-width="1.4" opacity="0.36"/>
<path d="M36.1 61.7 L44.2 62.6" stroke="#8e4d42" stroke-width="1.8" opacity="0.41"/>
<path d="M31.7 66.5 L42.9 65.0" stroke="#8e4d42" stroke-width="1.9" opacity="0.35"/>
<path d="M57.0 72.5 L65.1 75.1" stroke="#8e4d42" stroke-width="2.0" opacity="0.46"/>
<path d="M75.8 70.5 L85.1 68.3" stroke="#8e4d42" stroke-width="1.9" opacity="0.47"/>
<path d="M67.2 67.8 L76.2 68.7" stroke="#8e4d42" stroke-width="2.1" opacity="0.38"/>
<path d="M46.8 61.8 L60.5 62.7" stroke="#8e4d42" stroke-width="1.5" opacity="0.44"/>
<path d="M47.3 74.8 L59.3 79.0" stroke="#8e4d42" stroke-width="1.6" opacity="0.36"/>
<path d="M56.4 74.0 L61.4 75.9" stroke="#8e4d42" stroke-width="1.1" opacity="0.43"/>
<path d="M56.0 69.1 L66.5 67.1" stroke="#8e4d42" stroke-width="2.3" opacity="0.39"/>
<path d="M51.0 79.4 L62.8 76.6" stroke="#8e4d42" stroke-width="1.4" opacity="0.37"/>
<path d="M5.9 69.3 L17.9 71.0" stroke="#8e4d42" stroke-width="1.3" opacity="0.32"/>
<path d="M64.8 72.6 L78.0 71.4" stroke="#8e4d42" stroke-width="1.2" opacity="0.39"/>
<path d="M14.9 65.9 L26.7 62.8" stroke="#8e4d42" stroke-width="2.4" opacity="0.44"/>
<path d="M7.8 68.2 L18.1 68.3" stroke="#2e1c18" stroke-width="0.7" opacity="0.46"/>
<path d="M16.3 77.3 L24.7 76.2" stroke="#2e1c18" stroke-width="0.6" opacity="0.42"/>
<path d="M43.9 68.6 L49.8 73.5" stroke="#2e1c18" stroke-width="0.9" opacity="0.52"/>
<path d="M17.1 68.8 L28.0 73.0" stroke="#2e1c18" stroke-width="0.4" opacity="0.51"/>
<path d="M34.6 78.3 L46.8 77.7" stroke="#2e1c18" stroke-width="0.7" opacity="0.44"/>
<path d="M46.8 70.0 L57.6 74.1" stroke="#2e1c18" stroke-width="0.7" opacity="0.56"/>
<path d="M47.8 76.7 L55.2 79.2" stroke="#2e1c18" stroke-width="0.6" opacity="0.50"/>
<path d="M21.1 75.2 L27.3 74.2" stroke="#2e1c18" stroke-width="0.7" opacity="0.59"/>
<path d="M40.4 76.4 L46.7 80.0" stroke="#2e1c18" stroke-width="0.8" opacity="0.48"/>
<path d="M63.1 74.7 L69.2 74.7" stroke="#2e1c18" stroke-width="0.9" opacity="0.39"/>
<path d="M72.9 74.3 L85.6 79.8" stroke="#2e1c18" stroke-width="0.9" opacity="0.55"/>
<path d="M25.4 77.2 L34.6 74.0" stroke="#2e1c18" stroke-width="0.6" opacity="0.52"/>
<path d="M49.3 68.0 L61.0 74.6" stroke="#2e1c18" stroke-width="0.5" opacity="0.42"/>
<path d="M43.3 78.5 L48.8 77.9" stroke="#2e1c18" stroke-width="0.8" opacity="0.58"/>
<path d="M18.2 68.9 L31.4 66.2" stroke="#2e1c18" stroke-width="0.6" opacity="0.48"/>
<path d="M5.6 66.5 L16.6 70.5" stroke="#2e1c18" stroke-width="0.9" opacity="0.46"/>
<path d="M29.7 60.4 L38.3 61.8" stroke="#2e1c18" stroke-width="0.9" opacity="0.37"/>
<path d="M25.3 64.5 L35.5 72.1" stroke="#2e1c18" stroke-width="0.4" opacity="0.52"/>
<path d="M40.4 79.4 L48.9 79.6" stroke="#2e1c18" stroke-width="0.5" opacity="0.39"/>
<path d="M64.5 66.7 L74.6 70.4" stroke="#2e1c18" stroke-width="0.7" opacity="0.37"/>
<path d="M4.6 72.5 L16.0 69.2" stroke="#2e1c18" stroke-width="0.5" opacity="0.41"/>
<path d="M8.6 62.0 L15.1 61.4" stroke="#2e1c18" stroke-width="0.7" opacity="0.37"/>
<path d="M58.8 87.8 L59.9 93.2" stroke="#8a4438" stroke-width="2.6" opacity="0.41"/>
<path d="M55.6 97.0 L55.2 102.4" stroke="#8a4438" stroke-width="2.7" opacity="0.47"/>
<path d="M68.4 94.6 L68.0 100.1" stroke="#8a4438" stroke-width="2.2" opacity="0.38"/>
<path d="M53.8 83.1 L54.2 93.0" stroke="#8a4438" stroke-width="2.0" opacity="0.50"/>
<path d="M68.3 94.2 L68.6 100.1" stroke="#8a4438" stroke-width="2.6" opacity="0.47"/>
<path d="M72.1 109.7 L72.2 116.7" stroke="#8a4438" stroke-width="2.2" opacity="0.35"/>
<path d="M62.2 94.2 L62.8 100.0" stroke="#8a4438" stroke-width="2.1" opacity="0.43"/>
<path d="M63.8 79.0 L63.4 84.6" stroke="#8a4438" stroke-width="2.7" opacity="0.32"/>
<path d="M69.7 99.6 L70.6 105.7" stroke="#8a4438" stroke-width="2.0" opacity="0.43"/>
<path d="M70.4 88.5 L70.8 95.4" stroke="#8a4438" stroke-width="2.5" opacity="0.34"/>
<path d="M63.0 106.8 L63.8 119.0" stroke="#8a4438" stroke-width="2.8" opacity="0.49"/>
<path d="M60.2 79.3 L60.4 87.1" stroke="#8a4438" stroke-width="2.0" opacity="0.30"/>
<path d="M64.3 78.6 L64.5 83.9" stroke="#8a4438" stroke-width="2.6" opacity="0.34"/>
<path d="M64.3 85.7 L65.8 97.1" stroke="#8a4438" stroke-width="2.7" opacity="0.41"/>
<path d="M53.5 71.5 L55.7 81.9" stroke="#8a4438" stroke-width="2.5" opacity="0.35"/>
<path d="M72.1 95.1 L72.9 102.5" stroke="#8a4438" stroke-width="2.6" opacity="0.32"/>
<path d="M65.2 83.8 L65.4 93.1" stroke="#8a4438" stroke-width="2.5" opacity="0.31"/>
<path d="M63.3 100.8 L65.2 108.3" stroke="#8a4438" stroke-width="1.8" opacity="0.33"/>
<path d="M58.4 85.1 L61.4 96.4" stroke="#8a4438" stroke-width="1.8" opacity="0.38"/>
<path d="M53.7 68.6 L52.9 81.3" stroke="#8a4438" stroke-width="2.4" opacity="0.41"/>
<path d="M54.7 69.0 L56.5 81.1" stroke="#8a4438" stroke-width="2.4" opacity="0.47"/>
<path d="M80.6 74.9 L80.4 82.1" stroke="#8a4438" stroke-width="2.4" opacity="0.40"/>
<path d="M63.7 85.9 L64.8 93.8" stroke="#8a4438" stroke-width="1.8" opacity="0.40"/>
<path d="M55.8 95.9 L55.3 104.1" stroke="#8a4438" stroke-width="2.6" opacity="0.46"/>
<path d="M56.2 78.1 L56.8 90.0" stroke="#8a4438" stroke-width="2.5" opacity="0.34"/>
<path d="M65.6 115.8 L66.3 126.5" stroke="#8a4438" stroke-width="2.4" opacity="0.47"/>
<path d="M70.4 77.3 L72.5 86.1" stroke="#8a4438" stroke-width="2.0" opacity="0.35"/>
<path d="M60.1 91.0 L63.1 103.1" stroke="#8a4438" stroke-width="1.6" opacity="0.47"/>
<path d="M67.3 91.5 L68.1 103.6" stroke="#8a4438" stroke-width="2.8" opacity="0.39"/>
<path d="M61.4 95.5 L62.5 101.0" stroke="#8a4438" stroke-width="1.7" opacity="0.48"/>
<path d="M62.4 107.2 L62.9 113.7" stroke="#8a4438" stroke-width="1.9" opacity="0.39"/>
<path d="M64.8 96.6 L66.5 104.7" stroke="#8a4438" stroke-width="1.9" opacity="0.38"/>
<path d="M62.6 99.1 L62.4 109.9" stroke="#8a4438" stroke-width="1.6" opacity="0.32"/>
<path d="M61.5 99.7 L63.2 107.7" stroke="#8a4438" stroke-width="3.0" opacity="0.44"/>
<path d="M64.4 100.5 L63.9 108.2" stroke="#8a4438" stroke-width="2.1" opacity="0.46"/>
<path d="M65.7 63.7 Q70.1 66.3 74.4 68.2" fill="none" stroke="#2a1a16" stroke-width="0.77" opacity="0.63"/>
<path d="M27.1 64.3 Q30.5 62.0 34.9 61.2" fill="none" stroke="#2a1a16" stroke-width="0.63" opacity="0.80"/>
<path d="M8.6 65.2 Q10.9 65.8 13.9 65.5" fill="none" stroke="#2a1a16" stroke-width="0.65" opacity="0.64"/>
<path d="M13.0 63.6 Q15.9 63.8 19.1 64.3" fill="none" stroke="#2a1a16" stroke-width="0.87" opacity="0.59"/>
<path d="M35.2 62.1 Q39.1 61.5 43.7 59.8" fill="none" stroke="#2a1a16" stroke-width="0.79" opacity="0.79"/>
<path d="M30.6 59.9 Q33.5 61.3 37.0 62.6" fill="none" stroke="#2a1a16" stroke-width="0.99" opacity="0.79"/>
<path d="M61.9 65.7 Q67.5 64.6 73.0 65.1" fill="none" stroke="#2a1a16" stroke-width="0.94" opacity="0.80"/>
<path d="M21.8 62.3 Q24.6 63.8 27.7 63.6" fill="none" stroke="#2a1a16" stroke-width="0.69" opacity="0.66"/>
<path d="M26.6 63.1 Q30.4 61.2 32.3 59.8" fill="none" stroke="#2a1a16" stroke-width="0.61" opacity="0.83"/>
<path d="M68.9 63.3 Q72.7 65.2 75.2 66.4" fill="none" stroke="#2a1a16" stroke-width="0.66" opacity="0.75"/>
<path d="M33.2 63.1 Q37.9 60.8 42.4 57.5" fill="none" stroke="#2a1a16" stroke-width="0.81" opacity="0.55"/>
<path d="M19.2 62.8 Q24.2 60.7 29.4 60.2" fill="none" stroke="#2a1a16" stroke-width="0.96" opacity="0.71"/>
<path d="M-1.4 65.4 Q2.8 64.1 6.5 63.8" fill="none" stroke="#2a1a16" stroke-width="0.77" opacity="0.74"/>
<path d="M3.6 63.4 Q8.7 64.6 11.8 65.6" fill="none" stroke="#2a1a16" stroke-width="0.76" opacity="0.67"/>
<path d="M49.5 58.0 Q53.6 61.3 58.3 63.7" fill="none" stroke="#2a1a16" stroke-width="0.85" opacity="0.77"/>
<path d="M56.2 62.7 Q60.9 64.0 66.8 64.2" fill="none" stroke="#2a1a16" stroke-width="0.79" opacity="0.75"/>
<path d="M34.8 80.1 Q30.5 77.9 27.0 77.6" fill="none" stroke="#2a1a16" stroke-width="0.70" opacity="0.56"/>
<path d="M11.9 76.3 Q9.2 74.5 5.5 73.9" fill="none" stroke="#2a1a16" stroke-width="0.78" opacity="0.82"/>
<path d="M17.2 75.5 Q12.1 76.7 6.0 76.3" fill="none" stroke="#2a1a16" stroke-width="0.79" opacity="0.89"/>
<path d="M50.2 78.0 Q45.4 77.2 39.6 78.1" fill="none" stroke="#2a1a16" stroke-width="0.90" opacity="0.84"/>
<path d="M41.7 77.8 Q38.4 78.3 34.7 79.1" fill="none" stroke="#2a1a16" stroke-width="0.94" opacity="0.67"/>
<path d="M83.8 73.8 Q81.3 74.8 76.8 74.0" fill="none" stroke="#2a1a16" stroke-width="0.64" opacity="0.77"/>
<path d="M58.2 79.9 Q55.5 79.7 52.4 78.4" fill="none" stroke="#2a1a16" stroke-width="0.62" opacity="0.56"/>
<path d="M24.3 77.0 Q20.0 78.1 15.0 77.4" fill="none" stroke="#2a1a16" stroke-width="0.79" opacity="0.81"/>
<path d="M40.2 78.5 Q36.0 78.9 33.4 78.3" fill="none" stroke="#2a1a16" stroke-width="0.85" opacity="0.68"/>
<path d="M43.2 76.4 Q37.0 78.7 31.6 79.3" fill="none" stroke="#2a1a16" stroke-width="0.85" opacity="0.58"/>
<path d="M17.8 76.4 Q15.3 76.9 12.2 76.1" fill="none" stroke="#2a1a16" stroke-width="0.76" opacity="0.67"/>
<path d="M84.8 72.4 Q81.0 74.5 75.5 76.0" fill="none" stroke="#2a1a16" stroke-width="1.00" opacity="0.72"/>
<path d="M75.5 74.2 Q73.7 75.6 71.6 77.6" fill="none" stroke="#2a1a16" stroke-width="1.00" opacity="0.74"/>
<path d="M37.9 77.5 Q33.4 80.0 28.7 81.5" fill="none" stroke="#2a1a16" stroke-width="1.01" opacity="0.57"/>
<path d="M7.3 76.1 Q4.8 74.9 0.8 72.6" fill="none" stroke="#2a1a16" stroke-width="0.92" opacity="0.61"/>
<path d="M8.7 73.5 Q5.2 72.0 3.1 71.8" fill="none" stroke="#2a1a16" stroke-width="0.76" opacity="0.80"/>
<path d="M60.5 80.0 Q57.7 78.8 54.3 77.4" fill="none" stroke="#2a1a16" stroke-width="0.66" opacity="0.65"/>
<path d="M42.5 79.3 Q39.8 79.8 36.5 79.3" fill="none" stroke="#2a1a16" stroke-width="0.90" opacity="0.84"/>
<path d="M36.7 67.2 Q40.3 69.3 43.7 70.8" fill="none" stroke="#2a1a16" stroke-width="0.81" opacity="0.57"/>
<path d="M42.5 70.0 Q47.3 71.3 52.2 71.4" fill="none" stroke="#2a1a16" stroke-width="0.77" opacity="0.54"/>
<path d="M8.1 71.0 Q10.7 69.4 12.8 68.5" fill="none" stroke="#2a1a16" stroke-width="0.79" opacity="0.67"/>
<path d="M56.3 69.8 Q59.2 71.4 62.9 73.2" fill="none" stroke="#2a1a16" stroke-width="0.61" opacity="0.52"/>
<path d="M9.1 70.9 Q12.5 69.5 14.4 69.5" fill="none" stroke="#2a1a16" stroke-width="0.63" opacity="0.62"/>
<path d="M22.7 68.5 Q25.7 68.3 29.5 70.0" fill="none" stroke="#2a1a16" stroke-width="0.88" opacity="0.60"/>
<path d="M63.9 71.2 Q68.0 70.5 70.6 69.2" fill="none" stroke="#2a1a16" stroke-width="0.69" opacity="0.61"/>
<path d="M57.4 73.2 Q61.4 72.7 66.0 72.6" fill="none" stroke="#2a1a16" stroke-width="0.73" opacity="0.51"/>
<path d="M38.7 72.5 Q42.4 72.1 44.1 71.0" fill="none" stroke="#2a1a16" stroke-width="0.55" opacity="0.74"/>
<path d="M26.8 69.1 Q30.0 71.0 34.5 72.8" fill="none" stroke="#2a1a16" stroke-width="0.70" opacity="0.46"/>
<path d="M11.0 70.3 Q14.7 69.1 18.4 68.7" fill="none" stroke="#2a1a16" stroke-width="0.75" opacity="0.50"/>
<path d="M64.2 70.3 Q68.7 71.8 73.0 72.4" fill="none" stroke="#2a1a16" stroke-width="0.62" opacity="0.69"/>
<path d="M27.2 68.8 Q32.0 69.7 35.9 69.9" fill="none" stroke="#2a1a16" stroke-width="0.51" opacity="0.59"/>
<path d="M65.0 71.1 Q69.2 71.7 73.0 73.5" fill="none" stroke="#2a1a16" stroke-width="0.75" opacity="0.64"/>
</g>
<g fill="none" stroke="#8f4d43" stroke-linecap="round" filter="url(#ink)" opacity="0.85">
<path d="M22 89 Q25 102 29 114" stroke-width="1.8"/>
<path d="M34 91 Q36 106 37.5 121" stroke-width="1.4"/>
<path d="M6.5 107 L7.5 114" stroke-width="1.5"/>
<path d="M70 47 Q80 45 87 50" stroke-width="1" opacity="0.6"/>
<path d="M68 54 Q78 58 86 55" stroke-width="1" opacity="0.5"/>
<path d="M54 27 Q60 25 64 31 Q70 38 76 44" stroke-width="1.6"/>
</g>
<g fill="none" stroke="#2a1a16" stroke-linecap="round" filter="url(#ink)">
<path d="M37 6 Q38 1 44 1 Q50 1 50 6 Q48 9 44 8 Q40 8 37 10Z" fill="#2a1a16" stroke-width="0.8" opacity="0.92"/>
<path d="M35 7 Q34.5 17 40 25" stroke-width="1.2"/>
<path d="M50 6 Q52 14 50 24" stroke-width="0.9" opacity="0.7" stroke="#5a3028"/>
<path d="M46 11 Q47 16 46 21" stroke-width="0.6" opacity="0.5"/>
<path d="M23 36.5 Q27 50 34 61" stroke-width="1.1"/>
<path d="M41 26 Q42 30 44 34" stroke-width="0.8" opacity="0.7"/>
<path d="M53 28 Q52 40 51 50 Q50 58 50 64" stroke-width="1.2"/>
<path d="M57 36 Q58 50 56 64" stroke-width="0.8" opacity="0.7"/>
<path d="M56 30 Q66 35 74 43 Q80 48 87 50" stroke-width="0.8" opacity="0.75" stroke="#4a2a24"/>
<path d="M59 40 Q68 47 80 55" stroke-width="0.6" opacity="0.65"/>




<path d="M25 79 Q27 98 29 108 Q32 118 35 124" stroke-width="1.1"/>
<path d="M39 81.6 Q43 90 45 98 Q48 110 52 123" stroke-width="0.7" opacity="0.85"/>
<path d="M52 76 Q54 96 56 108 Q57 116 59 120" stroke-width="0.9"/>
</g>
<rect x="88.5" y="22" width="1.5" height="8" fill="#f2efe9" opacity="0.85"/>
<rect x="0" y="96" width="1.5" height="5" fill="#f2efe9" opacity="0.85"/>
</svg>

<!-- context menu -->
<div class="a" style="left:711px;top:265px;width:189px;height:199px;background:#fff;border:1px solid #d2d2d2;box-shadow:1px 1px 2px rgba(60,70,90,.25)"></div>
<div class="a mi" style="left:738px;top:271.2px">certify</div>
<div class="a" style="left:713px;top:286px;width:184px;height:1px;background:#ececec"></div>
<div class="a mi" style="left:738px;top:292.2px">Ignore All</div>
<div class="a mi" style="left:738px;top:310.7px">Add to Dictionary</div>
<div class="a" style="left:713px;top:326px;width:184px;height:1px;background:#ececec"></div>
<svg class="a" style="left:718px;top:330px" width="13" height="13" viewBox="0 0 13 13"><path d="M0.5 2.5 H6 L7.5 4 V11.5 H0.5Z" fill="#e4edf6" stroke="#b5c6d8" stroke-width="0.9"/><path d="M4.5 0.5 H10 L12 2.5 V11.5 H4.5Z" fill="#eef4fa" stroke="#b5c6d8" stroke-width="0.9"/></svg>
<div class="a mi mg" style="left:738px;top:332.2px">Copy</div>
<div class="a sc" style="top:332.2px">Ctrl+C</div>
<svg class="a" style="left:719px;top:349px" width="11" height="12" viewBox="0 0 11 12"><path d="M2 0.5 L6.5 7.5 M9 0.5 L4.5 7.5" stroke="#a9b0b8" stroke-width="1"/><circle cx="3" cy="9.3" r="1.9" fill="none" stroke="#a9b0b8" stroke-width="1"/><circle cx="8" cy="9.3" r="1.9" fill="none" stroke="#a9b0b8" stroke-width="1"/></svg>
<div class="a mi mg" style="left:738px;top:350.7px">Cut</div>
<div class="a sc" style="top:350.7px">Ctrl+X</div>
<svg class="a" style="left:718px;top:367px" width="14" height="13" viewBox="0 0 14 13"><rect x="0.5" y="1.5" width="9" height="11" fill="#e8c024" stroke="#c9a010" stroke-width="0.8"/><rect x="3" y="0.3" width="4" height="2.4" fill="#b08a10"/><rect x="6" y="6" width="7.5" height="6.5" fill="#fff" stroke="#a48a3a" stroke-width="0.8"/></svg>
<div class="a mi" style="left:738px;top:369.7px">Paste</div>
<div class="a sc" style="top:369.7px">Ctrl+V</div>
<div class="a" style="left:713px;top:384px;width:184px;height:1px;background:#ececec"></div>
<svg class="a" style="left:719px;top:389px" width="11" height="11" viewBox="0 0 11 11"><path d="M0.8 10.5 L5.5 0.5 L10.2 10.5 M2.6 7 H8.4" fill="none" stroke="#3f84e0" stroke-width="1.3"/></svg>
<div class="a mi" style="left:738px;top:390.2px">Font...</div>
<div class="a sc" style="top:390.2px">Ctrl+D</div>
<svg class="a" style="left:719px;top:407px" width="12" height="12" viewBox="0 0 12 12"><path d="M0 1H11M0 3.5H11M0 6H6M0 8.5H5M0 11H5" stroke="#5b6470" stroke-width="1"/><path d="M7.5 6 H11 M8.5 6 V11.5 M10 6 V11.5" stroke="#3f84e0" stroke-width="0.9"/><circle cx="8" cy="7.6" r="1.3" fill="#3f84e0"/></svg>
<div class="a mi" style="left:738px;top:408.9px">Paragraph...</div>
<svg class="a" style="left:719px;top:427px" width="12" height="11" viewBox="0 0 12 11"><rect x="0" y="0.5" width="1.6" height="1.6" fill="#3f84e0"/><rect x="0" y="4.7" width="1.6" height="1.6" fill="#3f84e0"/><rect x="0" y="8.9" width="1.6" height="1.6" fill="#3f84e0"/><rect x="0" y="2.6" width="1.6" height="1" fill="#9ec0ee"/><rect x="0" y="6.8" width="1.6" height="1" fill="#9ec0ee"/><path d="M4 1.3H11.5M4 5.5H11.5M4 9.7H11.5" stroke="#4d5560" stroke-width="1.1"/></svg>
<div class="a mi" style="left:738px;top:427.4px">Bullets and Numbering...</div>
<div class="a" style="left:713px;top:442px;width:184px;height:1px;background:#ececec"></div>
<svg class="a" style="left:718px;top:447px" width="14" height="12" viewBox="0 0 14 12"><circle cx="6" cy="6" r="5.5" fill="#4a8de0"/><path d="M2 4 Q4 2 6 3 Q8 5 10 3 M2.5 8 Q5 6 9 9" fill="none" stroke="#bcd6f6" stroke-width="1"/><rect x="6.5" y="7.5" width="7" height="4" rx="1" fill="#2f6fc8"/><path d="M7.5 9.5 H12.5" stroke="#fff" stroke-width="0.9" stroke-dasharray="1 0.8"/></svg>
<div class="a mi" style="left:738px;top:448.5px">Hyperlink...</div>
<div class="a sc" style="top:448.5px">Ctrl+K</div>

</body></html>
